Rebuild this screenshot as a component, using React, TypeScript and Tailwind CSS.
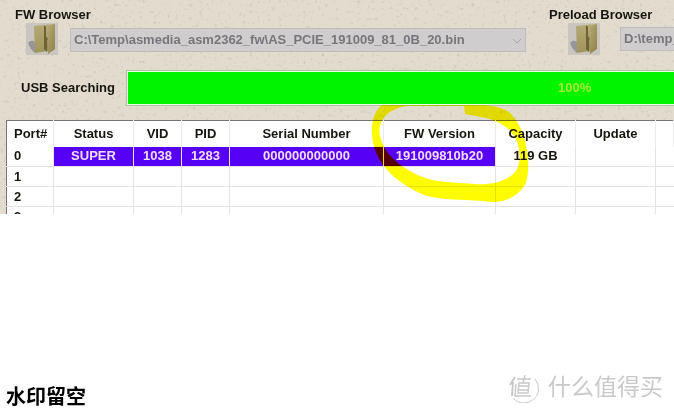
import React from "react";

interface PortRow {
  port: string;
  status?: string;
  vid?: string;
  pid?: string;
  serial?: string;
  fwVersion?: string;
  capacity?: string;
}

const rows: PortRow[] = [
  {
    port: "0",
    status: "SUPER",
    vid: "1038",
    pid: "1283",
    serial: "000000000000",
    fwVersion: "191009810b20",
    capacity: "119 GB",
  },
  { port: "1" },
  { port: "2" },
  { port: "3" },
];

const headers = ["Status", "VID", "PID", "Serial Number", "FW Version", "Capacity", "Update", ""];

function FolderIcon() {
  return (
    <svg viewBox="0 0 32 32" className="block h-8 w-8" aria-hidden="true">
      <defs>
        <linearGradient id="folderBack" x1="0" y1="0" x2="0" y2="1">
          <stop offset="0" stopColor="#b5a975" />
          <stop offset="1" stopColor="#a1945c" />
        </linearGradient>
        <linearGradient id="folderFront" x1="0" y1="0" x2="1" y2="1">
          <stop offset="0" stopColor="#b9ae7a" />
          <stop offset="1" stopColor="#8d7f48" />
        </linearGradient>
      </defs>
      <rect width="32" height="32" fill="#c9c6c0" />
      <path d="M2 20 Q5 16 9 19 L9 30 Q4 26 2 20Z" fill="#98969a" />
      <path d="M8 3 L28 1 L28 27 L9 30Z" fill="url(#folderBack)" />
      <path d="M18 2 L20 4 L20 13 L22 16 L21 29 L18 26 L18 17Z" fill="#6f6333" />
      <path d="M20 4 L29 1 L29 26 L22 31 L21 18 L22 15 L20 12Z" fill="url(#folderFront)" />
    </svg>
  );
}

/* Sand texture behind the tool window */
function SandTexture() {
  return (
    <svg className="absolute inset-0 h-full w-full" aria-hidden="true">
      <filter id="grain" x="0" y="0" width="100%" height="100%">
        <feTurbulence type="fractalNoise" baseFrequency="0.28" numOctaves="3" seed="8" />
        <feColorMatrix values="0 0 0 0 0.45  0 0 0 0 0.4  0 0 0 0 0.32  4 0 0 0 -2.4" />
      </filter>
      <rect width="100%" height="100%" filter="url(#grain)" opacity="0.35" />
    </svg>
  );
}

function Marker() {
  return (
    <svg
      viewBox="0 0 674 214"
      className="pointer-events-none absolute left-0 top-0 h-[214px] w-[674px] mix-blend-multiply"
      aria-hidden="true"
    >
      <path
        fill="#fffc00"
        fillRule="evenodd"
        d="M382 105 C374 111 371 123 372 134 C373 148 377 157 384 166 C393 178 410 190 427 196 C447 201 470 199 491 202 C508 203 521 193 526 183 C529 172 529 158 526 146 C524 131 516 118 509 112 C500 106 488 105 478 105 Z M408 106 L464 106 L465 114 L486 118 C502 122 514 131 518 144 C521 158 520 169 512 175 C502 183 488 185 474 184 L446 182 C427 181 412 173 402 166 C392 159 383 150 380 136 C377 122 387 108 408 106Z"
      />
    </svg>
  );
}

function Watermark() {
  return (
    <div className="flex items-center gap-2 text-[#c9c9c9]">
      <svg viewBox="0 0 32 32" className="h-8 w-8" fill="none" stroke="currentColor" aria-hidden="true">
        <path d="M5 27 A14 14 0 0 0 27 8" strokeWidth="1" />
        <path d="M7 6 L2 14 M5 11 L4 25" strokeWidth="2" />
        <path d="M9 8 H23 M17 4 L15 12 M11 12 H21 L20 22 H10 Z M11 15 H20 M11 19 H20 M8 13 L7 25 H23" strokeWidth="1.5" />
      </svg>
      <span className="text-[23px] leading-8">什么值得买</span>
    </div>
  );
}

export default function App() {
  return (
    <main className="flex min-h-screen flex-col bg-white font-['Liberation_Sans','Noto_Sans_CJK_SC',sans-serif] text-[13px] font-bold leading-4 text-[#17150f]">
      <section className="relative h-[214px] overflow-hidden bg-[#e2dccf]">
        <SandTexture />
        <div className="relative">
          {/* Firmware and preload pickers */}
          <div className="flex pt-[7px]">
            <div className="w-[534px] shrink-0 pl-[15px]">
              <label htmlFor="fw-file" className="block">FW Browser</label>
              <div className="flex items-start pl-[11px]">
                <button type="button" aria-label="Browse firmware">
                  <FolderIcon />
                </button>
                <div className="relative ml-3 mt-[5px]">
                  <select
                    id="fw-file"
                    className="block h-6 w-[456px] appearance-none border border-[#c0bdbc] bg-[#d0cdce] px-[3px] text-[#77767a]"
                  >
                    <option>{"C:\\Temp\\asmedia_asm2362_fw\\AS_PCIE_191009_81_0B_20.bin"}</option>
                  </select>
                  <svg viewBox="0 0 10 6" className="pointer-events-none absolute right-1 top-[10px] h-[6px] w-[10px]" aria-hidden="true">
                    <path d="M1 1 L5 5 L9 1" fill="none" stroke="#a5a3a4" />
                  </svg>
                </div>
              </div>
            </div>
            <div className="min-w-0 flex-1 pl-[15px]">
              <label htmlFor="preload-file" className="block whitespace-nowrap">Preload Browser</label>
              <div className="flex items-start pl-[19px]">
                <button type="button" aria-label="Browse preload" className="shrink-0">
                  <FolderIcon />
                </button>
                <select
                  id="preload-file"
                  className="ml-5 mt-1 h-6 w-[456px] shrink-0 appearance-none border border-[#c0bdbc] bg-[#d0cdce] px-[3px] text-[#77767a]"
                >
                  <option>{"D:\\temp_"}</option>
                </select>
              </div>
            </div>
          </div>

          {/* Search progress */}
          <div className="mt-[15px] flex items-center">
            <span className="w-[126px] shrink-0 pl-[21px]">USB Searching</span>
            <div
              role="progressbar"
              aria-label="USB Searching"
              aria-valuenow={100}
              className="flex h-9 flex-1 items-center border-y border-l border-[#a9c59a] bg-[#effbe9] py-px pl-px"
            >
              <div className="flex h-full w-full items-center bg-[#00f400] pl-[430px] text-[#a6e83c]">
                100%
              </div>
            </div>
          </div>

          {/* Port list */}
          <div className="mt-[14px] pl-[6px]">
            <table className="w-full table-fixed border-collapse border-l border-t border-[#77756f] bg-white text-center">
              <colgroup>
                <col className="w-[47px]" />
                <col className="w-[80px]" />
                <col className="w-[48px]" />
                <col className="w-[48px]" />
                <col className="w-[154px]" />
                <col className="w-[112px]" />
                <col className="w-[80px]" />
                <col className="w-[80px]" />
                <col />
              </colgroup>
              <thead>
                <tr className="h-[26px]">
                  <th className="border-r border-[#ececec] pl-[7px] text-left">Port#</th>
                  {headers.map((header, i) => (
                    <th key={i} className="border-r border-[#ececec]">{header}</th>
                  ))}
                </tr>
              </thead>
              <tbody>
                {rows.map((row) => (
                  <tr key={row.port} className="h-5">
                    <td className="border-b border-r border-[#e4e4e4] pl-[7px] text-left">{row.port}</td>
                    {[row.status, row.vid, row.pid, row.serial, row.fwVersion].map((value, i) => (
                      <td
                        key={i}
                        className={
                          value
                            ? "border-b border-r border-[#e4e4e4] bg-[#5600f5] text-[#f0dcff]"
                            : "border-b border-r border-[#e4e4e4]"
                        }
                      >
                        {value}
                      </td>
                    ))}
                    <td className="border-b border-r border-[#e4e4e4]">{row.capacity}</td>
                    <td className="border-b border-r border-[#e4e4e4]" />
                    <td className="border-b border-[#e4e4e4]" />
                  </tr>
                ))}
              </tbody>
            </table>
          </div>
        </div>
        <Marker />
      </section>

      <footer className="mt-auto flex items-end justify-between pb-px pl-[6px] pr-[11px] text-black">
        <p className="text-[20px] leading-8">水印留空</p>
        <div className="pb-[10px] font-normal">
          <Watermark />
        </div>
      </footer>
    </main>
  );
}
